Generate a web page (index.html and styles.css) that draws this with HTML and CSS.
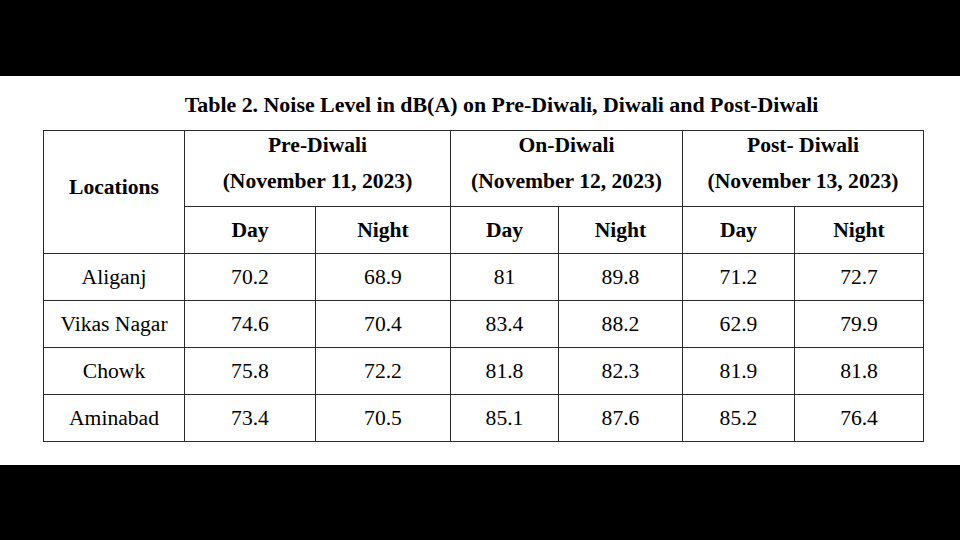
FILE: index.html
```html
<!DOCTYPE html>
<html lang="en">
<head>
<meta charset="utf-8">
<title>Table 2. Noise Level</title>
<link rel="stylesheet" href="styles.css">
</head>
<body>
<div class="band"></div>
<main class="sheet">
  <h1 class="caption">Table 2. Noise Level in dB(A) on Pre-Diwali, Diwali and Post-Diwali</h1>
  <table class="noise">
    <colgroup>
      <col class="c-loc">
      <col class="c-a">
      <col class="c-b">
      <col class="c-c">
      <col class="c-d">
      <col class="c-e">
      <col class="c-f">
    </colgroup>
    <thead>
      <tr class="r-group">
        <th rowspan="2" class="loc-head">Locations</th>
        <th colspan="2" class="group"><div class="g1">Pre-Diwali</div><div class="g2">(November 11, 2023)</div></th>
        <th colspan="2" class="group"><div class="g1">On-Diwali</div><div class="g2">(November 12, 2023)</div></th>
        <th colspan="2" class="group"><div class="g1">Post- Diwali</div><div class="g2">(November 13, 2023)</div></th>
      </tr>
      <tr class="r-sub">
        <th>Day</th><th>Night</th><th>Day</th><th>Night</th><th>Day</th><th>Night</th>
      </tr>
    </thead>
    <tbody>
      <tr><td>Aliganj</td><td>70.2</td><td>68.9</td><td>81</td><td>89.8</td><td>71.2</td><td>72.7</td></tr>
      <tr><td>Vikas Nagar</td><td>74.6</td><td>70.4</td><td>83.4</td><td>88.2</td><td>62.9</td><td>79.9</td></tr>
      <tr><td>Chowk</td><td>75.8</td><td>72.2</td><td>81.8</td><td>82.3</td><td>81.9</td><td>81.8</td></tr>
      <tr><td>Aminabad</td><td>73.4</td><td>70.5</td><td>85.1</td><td>87.6</td><td>85.2</td><td>76.4</td></tr>
    </tbody>
  </table>
</main>
<div class="band band-bottom"></div>
</body>
</html>
```

FILE: styles.css
```css
html, body {
  margin: 0;
  padding: 0;
  background: #000;
}

body {
  width: 960px;
  height: 540px;
  overflow: hidden;
  display: flex;
  flex-direction: column;
  font-family: "Liberation Serif", "Times New Roman", serif;
  color: #000;
}

.band {
  height: 76px;
  background: #000;
  flex: none;
}

.band-bottom {
  flex: 1;
}

.sheet {
  height: 389px;
  background: #fff;
  box-sizing: border-box;
  padding-top: 16px;
}

.caption {
  margin: 0 0 12px 0;
  padding-left: 43px;
  font-size: 21.9px;
  line-height: 26px;
  font-weight: bold;
  text-align: center;
  color: #000;
}

.noise {
  margin-left: 43px;
  width: 881px;
  table-layout: fixed;
  border-collapse: collapse;
  font-size: 21.6px;
}

.c-loc { width: 141px; }
.c-a { width: 131px; }
.c-b { width: 135px; }
.c-c { width: 108px; }
.c-d { width: 124px; }
.c-e { width: 112px; }
.c-f { width: 129px; }

.noise th,
.noise td {
  border: 1px solid #2a2a2a;
  padding: 0;
  text-align: center;
  vertical-align: middle;
  white-space: nowrap;
}

.noise th {
  font-weight: bold;
}

.r-group {
  height: 76px;
}

.group {
  vertical-align: top !important;
}

.g1 {
  line-height: 28px;
}

.g2 {
  line-height: 30px;
  margin-top: 7px;
}

.loc-head {
  padding-bottom: 9px !important;
}

.r-sub,
.noise tbody tr {
  height: 47px;
}
```
